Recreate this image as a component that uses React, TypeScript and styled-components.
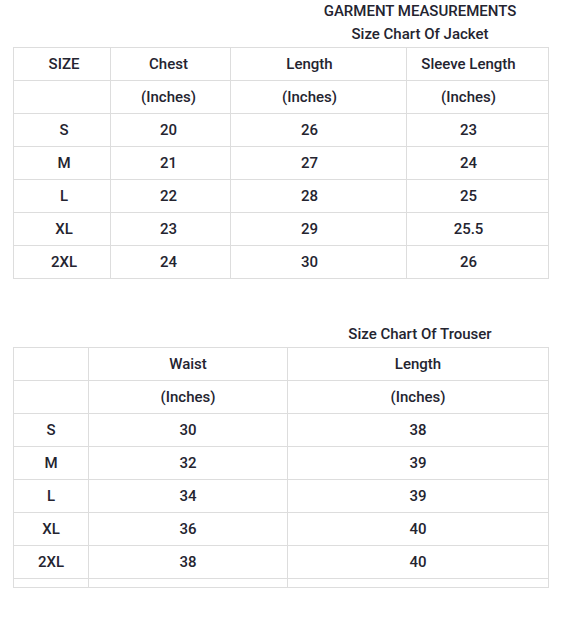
import styled, { createGlobalStyle } from 'styled-components'

const GlobalStyle = createGlobalStyle`
  body {
    margin: 0;
    background: #fff;
    font-family: Roboto, "Noto Sans", sans-serif;
    color: #242430;
  }
`

const Page = styled.div`
  padding: 0 38px 0 13px;
  width: 535px;
`

const Heading = styled.div<{ gapTop?: number }>`
  margin-left: 278px;
  width: 258px;
  text-align: center;
  font-size: 15px;
  font-weight: 500;
  line-height: 23px;
  margin-top: ${(props) => props.gapTop || 0}px;
`

const Table = styled.table`
  width: 535px;
  border-collapse: collapse;
  table-layout: fixed;
  margin-top: 1px;
`

const Row = styled.tr<{ short?: boolean }>`
  height: ${(props) => (props.short ? '9px' : '33px')};
`

// shift moves the label off the cell centre, as in the original chart
const Cell = styled.td<{ shift?: number }>`
  border: 1px solid #dddddd;
  padding: 0;
  padding-left: ${(props) => (props.shift && props.shift > 0 ? props.shift * 2 : 0)}px;
  padding-right: ${(props) => (props.shift && props.shift < 0 ? -props.shift * 2 : 0)}px;
  text-align: center;
  vertical-align: middle;
  font-size: 15px;
  font-weight: 500;
  line-height: 17px;
  color: #242430;
`

const jacketShift = [2, -2, -9, -9]

const jacket = [
  ['S', '20', '26', '23'],
  ['M', '21', '27', '24'],
  ['L', '22', '28', '25'],
  ['XL', '23', '29', '25.5'],
  ['2XL', '24', '30', '26'],
]

const trouser = [
  ['S', '30', '38'],
  ['M', '32', '39'],
  ['L', '34', '39'],
  ['XL', '36', '40'],
  ['2XL', '38', '40'],
]

const App = () => {
  return (
    <Page>
      <GlobalStyle />
      <Heading>GARMENT MEASUREMENTS</Heading>
      <Heading>Size Chart Of Jacket</Heading>
      <Table>
        <colgroup>
          <col style={{ width: 97 }} />
          <col style={{ width: 120 }} />
          <col style={{ width: 176 }} />
          <col style={{ width: 142 }} />
        </colgroup>
        <tbody>
          <Row>
            {['SIZE', 'Chest', 'Length', 'Sleeve Length'].map((v, i) => (
              <Cell key={i} shift={jacketShift[i]}>
                {v}
              </Cell>
            ))}
          </Row>
          <Row>
            {['', '(Inches)', '(Inches)', '(Inches)'].map((v, i) => (
              <Cell key={i} shift={jacketShift[i]}>
                {v}
              </Cell>
            ))}
          </Row>
          {jacket.map((r) => (
            <Row key={r[0]}>
              {r.map((v, i) => (
                <Cell key={i} shift={jacketShift[i]}>
                  {v}
                </Cell>
              ))}
            </Row>
          ))}
        </tbody>
      </Table>
      <Heading gapTop={44}>Size Chart Of Trouser</Heading>
      <Table>
        <colgroup>
          <col style={{ width: 75 }} />
          <col style={{ width: 199 }} />
          <col style={{ width: 261 }} />
        </colgroup>
        <tbody>
          <Row>
            <Cell></Cell>
            <Cell>Waist</Cell>
            <Cell>Length</Cell>
          </Row>
          <Row>
            <Cell></Cell>
            <Cell>(Inches)</Cell>
            <Cell>(Inches)</Cell>
          </Row>
          {trouser.map((r) => (
            <Row key={r[0]}>
              {r.map((v, i) => (
                <Cell key={i}>{v}</Cell>
              ))}
            </Row>
          ))}
          <Row short>
            <Cell></Cell>
            <Cell></Cell>
            <Cell></Cell>
          </Row>
        </tbody>
      </Table>
    </Page>
  )
}

export default App
